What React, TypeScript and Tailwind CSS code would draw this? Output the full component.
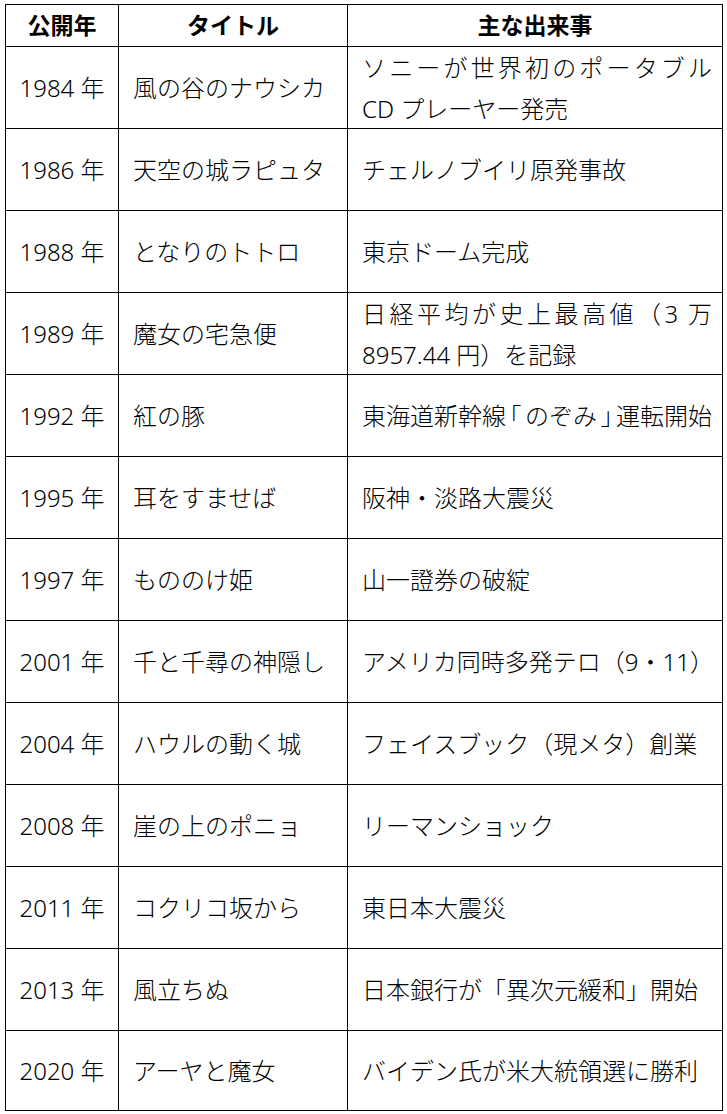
import React from "react";

type Row = { year: string; title: string; event: React.ReactNode };

const halt = "[font-feature-settings:'halt'] mx-[3.5px]";

const rows: Row[] = [
  {
    year: "1984 年",
    title: "風の谷のナウシカ",
    event: (
      <div className="flex flex-col leading-[41px]">
        <div className="[text-align-last:justify] text-justify">ソニーが世界初のポータブル</div>
        <div>CD プレーヤー発売</div>
      </div>
    ),
  },
  { year: "1986 年", title: "天空の城ラピュタ", event: "チェルノブイリ原発事故" },
  { year: "1988 年", title: "となりのトトロ", event: "東京ドーム完成" },
  {
    year: "1989 年",
    title: "魔女の宅急便",
    event: (
      <div className="flex flex-col leading-[41px]">
        <div className="[text-align-last:justify] text-justify">日経平均が史上最高値（3 万</div>
        <div>8957.44 円）を記録</div>
      </div>
    ),
  },
  {
    year: "1992 年",
    title: "紅の豚",
    event: (
      <span className="whitespace-nowrap">
        東海道新幹線<span className={halt}>「</span>のぞみ<span className={halt}>」</span>運転開始
      </span>
    ),
  },
  { year: "1995 年", title: "耳をすませば", event: "阪神・淡路大震災" },
  { year: "1997 年", title: "もののけ姫", event: "山一證券の破綻" },
  { year: "2001 年", title: "千と千尋の神隠し", event: "アメリカ同時多発テロ（9・11）" },
  { year: "2004 年", title: "ハウルの動く城", event: "フェイスブック（現メタ）創業" },
  { year: "2008 年", title: "崖の上のポニョ", event: "リーマンショック" },
  { year: "2011 年", title: "コクリコ坂から", event: "東日本大震災" },
  { year: "2013 年", title: "風立ちぬ", event: "日本銀行が「異次元緩和」開始" },
  { year: "2020 年", title: "アーヤと魔女", event: "バイデン氏が米大統領選に勝利" },
];

export default function App() {
  return (
    <div
      className="min-h-screen w-[727px] bg-white pt-[4px] pl-[5px]"
      style={{ fontFamily: '"Noto Sans", "Noto Sans CJK JP", sans-serif' }}
    >
      <div className="w-[718px] border-l border-t border-black">
        <div className="flex h-[42px] text-[23px] font-bold text-black">
          <div className="flex w-[113px] items-center justify-center border-r border-b border-black">公開年</div>
          <div className="flex w-[229px] items-center justify-center border-r border-b border-black">タイトル</div>
          <div className="flex w-[375px] items-center justify-center border-r border-b border-black">主な出来事</div>
        </div>
        {rows.map((r, i) => (
          <div
            key={r.year}
            className={`flex text-[24px] font-light text-black ${i === rows.length - 1 ? "h-[80px]" : "h-[82px]"}`}
          >
            <div className="flex w-[113px] items-center justify-center border-r border-b border-black whitespace-nowrap">
              {r.year}
            </div>
            <div className="flex w-[229px] items-center border-r border-b border-black pl-[14px] whitespace-nowrap">
              {r.title}
            </div>
            <div className="flex w-[375px] items-center border-r border-b border-black pl-[14px] pr-[10px]">
              <div className="w-full">{r.event}</div>
            </div>
          </div>
        ))}
      </div>
    </div>
  );
}
